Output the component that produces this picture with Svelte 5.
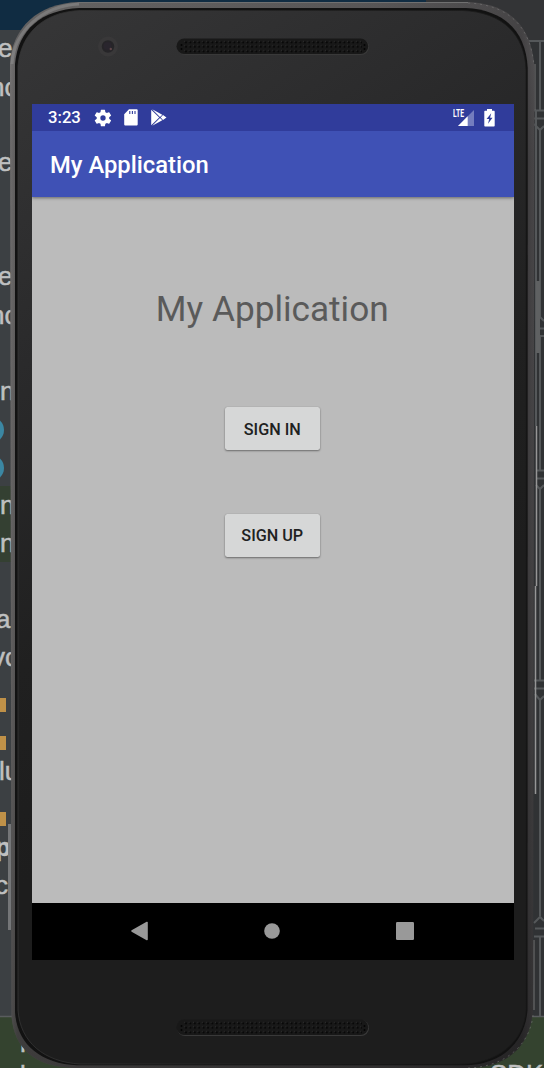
<script>
  const codeLines = [
    ['e', -2, 57], ['nc', -10, 96], ['e', -2, 171], ['e', -2, 285], ['nc', -10, 324],
    ['n', 0, 400], ['n', 0, 514], ['n', 0, 552], ['a', -4, 628], ['vc', -8, 666],
    ['lu', -1, 780], ['p', -5, 856, 700], ['c', -5, 894]
  ];
  const marks = [698, 736, 812];
  const actions = ['SIGN IN', 'SIGN UP'];
  const outline = 'M78 2H468C511 4 532 27 534.5 68L533 1010C531 1045 508 1068 468 1068H74C34 1067 14 1048 11.5 1016L10 64C12 27 38 4 78 2Z';
  const rim = 'M79 8H466C504 10 526 31 527.7 68L527.5 1010C525 1042 502 1065 464 1065.3H77C40 1063.5 17 1044 15 1012V64C18 29 42 10 79 8Z';
  const face = 'M80 10.5H462C502 12 525 34 526 70L526 1010C524 1041 499 1064 458 1064H80C44 1062 20 1042 18 1010V66C21 32 45 12 80 10.5Z';
</script>

<main>
  <svg class="scene" width="544" height="1068" viewBox="0 0 544 1068" aria-hidden="true">
    <defs>
      <linearGradient id="metal" x1="0" y1="0" x2="1" y2="0">
        <stop offset="0" stop-color="#6d6b6b" /><stop offset=".015" stop-color="#545252" />
        <stop offset=".7" stop-color="#434142" /><stop offset=".975" stop-color="#302e30" /><stop offset="1" stop-color="#434143" />
      </linearGradient>
      <linearGradient id="dim" x1="0" y1="0" x2="0" y2="1">
        <stop offset="0" stop-color="#aaa" stop-opacity=".2" /><stop offset=".15" stop-color="#777" stop-opacity=".08" />
        <stop offset="1" stop-color="#111" stop-opacity=".35" />
      </linearGradient>
      <linearGradient id="glass" gradientUnits="userSpaceOnUse" x1="20" y1="20" x2="420" y2="620">
        <stop offset="0" stop-color="#363637" /><stop offset=".4" stop-color="#2a2a2b" />
        <stop offset=".75" stop-color="#202020" /><stop offset="1" stop-color="#1d1d1d" />
      </linearGradient>
      <linearGradient id="edge" x1="0" y1="0" x2="1" y2="0">
        <stop offset="0" stop-color="#353535" /><stop offset=".5" stop-color="#232323" /><stop offset="1" stop-color="#191919" />
      </linearGradient>
      <pattern id="holes" patternUnits="userSpaceOnUse" x="183.4" y="40" width="4.4" height="4.5">
        <circle cx="2.6" cy="2.3" r="1.05" fill="#050505" />
        <circle cx="1.3" cy="1.2" r=".55" fill="#303030" />
      </pattern>
      <g id="speaker">
        <rect x="177" y="39" width="192" height="16" rx="8" fill="#393939" />
        <rect x="176.5" y="38.5" width="191.7" height="15.6" rx="7.8" fill="#181818" />
        <rect x="183" y="40" width="179" height="13.5" fill="url(#holes)" />
        <g fill="#050505"><circle cx="181.5" cy="45" r="1" /><circle cx="181.5" cy="49" r="1" /><circle cx="364.5" cy="45" r="1" /><circle cx="364.5" cy="49" r="1" /></g>
      </g>
    </defs>

    <rect width="544" height="1068" fill="#303234" />
    <rect width="30" height="1068" fill="#3c4043" />
    <rect width="426" height="30" fill="#102c42" />
    <rect x="426" width="118" height="40" fill="#333436" />
    <rect y="486" width="30" height="76" fill="#344032" />
    <rect y="1016" width="544" height="52" fill="#34432f" />
    <path d="M0 1016.5H30M520 1016.5H544" stroke="#595c5e" stroke-width="1.5" />
    <circle cx="-9" cy="430" r="13" fill="#3b87a3" />
    <circle cx="-9" cy="468" r="13" fill="#3b87a3" />
    {#each marks as y}<rect x="0" {y} width="6" height="14" fill="#bf9148" />{/each}
    <g class="code">
      {#each codeLines as [text, x, y, weight]}<text {x} {y} font-weight={weight ?? 400}>{text}</text>{/each}
      <text x="20" y="1052">r</text><text x="20" y="1084">l</text>
      <text x="490" y="1083">SDK</text>
    </g>
    <rect x="8" y="824" width="3" height="106" fill="#747678" />

    <g fill="none" stroke="#55585a" stroke-width="2">
      <path d="M528 41H544M540 41V110M534 110.5H544M534 118.5H544M534 124L540 130L544 126M540 130V317L544 321M544 328.5H539M544 336H540V470M536 470.5H544M536 478.5H544M536 485L540 489L544 485M540 489V680M534 680.5H544M534 688.5H544M535 694L540 700L544 696M540 700V916M534 923L540 917L544 921M535 928.5H544M534 936.5H544M540 936.5V1016M536 110V426" />
    </g>
    <path d="M538 281V353" stroke="#5f6162" stroke-width="4" />
    <path d="M536.5 426V586M535.5 586V794" stroke="#969696" stroke-width="1.5" />
    <path d="M535 64V110M534 940V1010" stroke="#727272" />

    <path d={outline} fill="url(#metal)" />
    <path d={outline} fill="url(#dim)" />
    <path d="M12 64C14 31 42 6 79 4" fill="none" stroke="#929292" stroke-width="3" opacity=".5" />
    <path d="M78 2.5H468" stroke="#707070" />
    <path d="M468 3C511 5 531 29 534 66M533 1015C530 1045 505 1067 468 1068" fill="none" stroke="#777" stroke-width="1" stroke-dasharray="2 4" opacity=".6" />
    <path d={rim} fill="#121212" />
    <path d={face} fill="url(#glass)" stroke="url(#edge)" stroke-width=".8" />

    <circle cx="108" cy="46.5" r="10" fill="#393839" />
    <circle cx="108" cy="46.5" r="6.2" fill="#262528" />
    <circle cx="107.5" cy="46" r="4" fill="#29252d" />
    <circle cx="110.8" cy="49" r="1.2" fill="#5e4648" />
    <use href="#speaker" />
    <use href="#speaker" y="981" />
  </svg>

  <section class="screen">
    <header class="status">
      <span class="clock">3:23</span>
      <svg class="gear" width="20" height="20" viewBox="0 0 24 24"><path fill="#fff" fill-rule="evenodd" d="M19.4 13a8 8 0 0 0 0-2l2.1-1.6a.5.5 0 0 0 .1-.7l-2-3.4a.5.5 0 0 0-.6-.2l-2.5 1a7 7 0 0 0-1.7-1l-.4-2.6a.5.5 0 0 0-.5-.5h-4a.5.5 0 0 0-.5.5L9 5.1a8 8 0 0 0-1.7 1l-2.5-1a.5.5 0 0 0-.6.2l-2 3.4a.5.5 0 0 0 .1.7L4.5 11a8 8 0 0 0 0 2l-2.2 1.6a.5.5 0 0 0-.1.7l2 3.4c.1.2.4.3.6.2l2.5-1a8 8 0 0 0 1.7 1l.4 2.6c0 .3.2.5.5.5h4c.3 0 .5-.2.5-.5l.4-2.6a7 7 0 0 0 1.7-1l2.5 1c.2.1.5 0 .6-.2l2-3.4a.5.5 0 0 0-.1-.7zM12 15.2a3.2 3.2 0 1 1 0-6.4 3.2 3.2 0 0 1 0 6.4z" /></svg>
      <svg class="card" width="14" height="17" viewBox="0 0 14 17"><path fill="#fff" d="M5 .3h7.4c.9 0 1.3.5 1.3 1.3v13.6c0 .9-.5 1.4-1.4 1.4H1.6c-.9 0-1.4-.5-1.4-1.4V5.2z" /><path stroke="#303c9b" stroke-width="1.1" d="M5.8 2v3M8.4 2v3M11 2v3" /></svg>
      <svg class="play" width="16" height="17" viewBox="0 0 16 17"><path fill="#fff" d="M.2.7 8.2 8.5.2 16.3zM1.2.2 11.3 5.8 9 8zM1.2 16.8 11.3 11.2 9 9zM12 6.1l3.5 2.4-3.5 2.4-2.3-2.4z" /></svg>
      <span class="spacer"></span>
      <svg width="22" height="18" viewBox="0 0 22 18"><path fill="#747dbe" d="M21 1v16H5z" /><path fill="#303c9b" d="M0 0h11.5v8.5H0z" /><path fill="#fff" d="M14.7 7.3V17H5z" /><text class="lte" transform="scale(.68 1)" x="0" y="8">LTE</text></svg>
      <svg class="battery" width="11" height="18" viewBox="0 0 11 18"><path fill="#fff" d="M3 0h5v1.8h1.7c.6 0 1 .4 1 1v13.6c0 .6-.4 1-1 1H1.3c-.6 0-1-.4-1-1V2.8c0-.6.4-1 1-1H3z" /><path fill="#303c9b" d="M7.2 4.3 2.6 10h2.6l-1.2 4.8L8.5 8.7H6.1z" /></svg>
    </header>
    <div class="toolbar">My Application</div>
    <div class="content">
      <h1>My Application</h1>
      {#each actions as label}<button>{label}</button>{/each}
    </div>
    <nav>
      <svg width="20" height="22" viewBox="0 0 20 22"><path d="M17 2.5v17L2 11z" fill="#999" stroke="#999" stroke-width="1.6" stroke-linejoin="round" /></svg>
      <svg width="20" height="22" viewBox="0 0 20 22"><circle cx="10" cy="11" r="7.8" fill="#999" /></svg>
      <svg width="20" height="22" viewBox="0 0 20 22"><rect x="1" y="2" width="18" height="18" rx="1.2" fill="#999" /></svg>
    </nav>
  </section>
</main>

<style>
  :global(body) { margin: 0; background: #303234; }
  main { position: relative; box-sizing: border-box; width: 544px; height: 1068px; padding: 104px 30px 108px 32px; overflow: hidden; font-family: Roboto, sans-serif; }
  .scene { position: absolute; inset: 0; }
  .code { font: 26px "Liberation Sans", sans-serif; fill: #bfc0c0; stroke: #bfc0c0; stroke-width: .5px; }
  .screen { position: relative; display: flex; flex-direction: column; width: 482px; height: 856px; background: #bbb; }
  .status { display: flex; align-items: center; height: 27px; box-sizing: border-box; padding: 0 19.5px 0 16px; background: #303c9b; color: #fff; }
  .clock { font-size: 16.7px; font-weight: 500; line-height: 27px; width: 45px; }
  .gear { margin-right: 11px; }
  .card { margin-right: 13px; }
  .spacer { flex: 1; }
  .battery { margin-left: 8.5px; }
  .lte { font: 700 10px Roboto, sans-serif; fill: #fff; }
  .toolbar { position: relative; height: 66px; box-sizing: border-box; padding: 1px 0 0 18px; line-height: 66px; background: #3f51b5; color: #fff; font-size: 23.8px; font-weight: 500; box-shadow: 0 1px 3px rgb(0 0 0 / .45); clip-path: inset(0 0 -6px 0); }
  .content { flex: 1; display: flex; flex-direction: column; align-items: center; padding-right: 1.5px; }
  h1 { margin: 90px 0 75px; font-size: 35.2px; line-height: 45px; font-weight: 400; color: #5a5a5a; }
  button { display: block; width: 94.5px; height: 43px; margin: 0 0 63.5px; padding: 1.5px 0 0; border: 0; border-radius: 2.5px; background: #d6d7d7; color: #202121; font: 500 16.2px Roboto, sans-serif; box-shadow: 0 1px 2px rgb(0 0 0 / .42), 0 0 1px rgb(0 0 0 / .2); }
  nav { display: flex; align-items: center; justify-content: space-between; height: 57px; box-sizing: border-box; padding: 0 98.8px 2px 97.6px; background: #000; }
  nav svg, .status svg { display: block; flex: none; }
</style>
